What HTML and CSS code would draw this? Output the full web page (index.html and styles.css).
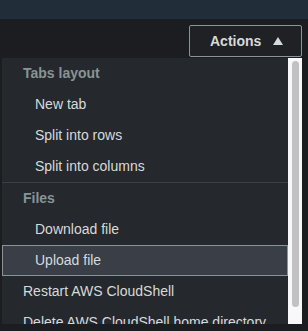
FILE: index.html
```html
<!DOCTYPE html>
<html lang="en">
<head>
  <meta charset="UTF-8">
  <title>CloudShell Actions</title>
  <link rel="stylesheet" href="styles.css">
</head>
<body>
  <div class="topbar"></div>

  <div class="toolbar">
    <button class="actions-btn">
      Actions
      <svg class="caret" width="10" height="8" viewBox="0 0 10 8"><polygon points="5,0 10,8 0,8" fill="#d5dbdb"/></svg>
    </button>
  </div>

  <!-- Dropdown menu -->
  <div class="menu">
    <ul class="menu-list">
      <li class="group-title">Tabs layout</li>
      <li class="item sub">New tab</li>
      <li class="item sub">Split into rows</li>
      <li class="item sub">Split into columns</li>
      <li class="divider"></li>
      <li class="group-title">Files</li>
      <li class="item sub">Download file</li>
      <li class="item sub active">Upload file</li>
      <li class="item">Restart AWS CloudShell</li>
      <li class="item">Delete AWS CloudShell home directory</li>
    </ul>
    <div class="scrollbar"><div class="thumb"></div></div>
  </div>
</body>
</html>
```

FILE: styles.css
```css
* {
  margin: 0;
  padding: 0;
  box-sizing: border-box;
  font-family: "Liberation Sans", Arial, sans-serif;
}
body {
  width: 308px;
  height: 331px;
  overflow: hidden;
  background: #1b1d21;
}
.topbar {
  height: 19px;
  background: #222d3a;
}
.toolbar {
  display: flex;
  justify-content: flex-end;
  padding: 6px 6px 0 0;
}
.actions-btn {
  display: flex;
  align-items: center;
  gap: 12px;
  width: 113px;
  height: 32px;
  padding: 0 0 0 20px;
  background: #1f2125;
  border: 1px solid #879596;
  border-radius: 2px;
  color: #d5dbdb;
  font-size: 14px;
  font-weight: 700;
}
.caret {
  margin-top: -1px;
}
.menu {
  display: flex;
  width: 300px;
  height: 266px;
  margin: 1px 0 0 2px;
  background: #25282d;
  overflow: hidden;
}
.menu-list {
  flex: 1;
  list-style: none;
}
.group-title,
.item {
  height: 31px;
  line-height: 31px;
  padding-left: 21px;
  font-size: 14px;
  white-space: nowrap;
}
.group-title {
  color: #879596;
  font-weight: 700;
}
.item {
  color: #d5dbdb;
}
.item.sub {
  padding-left: 33px;
}
.item.active {
  background: #3a3f47;
  border: 1px solid #879596;
  line-height: 29px;
  padding-left: 32px;
}
.divider {
  height: 1px;
  margin-bottom: 0;
  background: #3b4046;
}
.scrollbar {
  width: 14px;
  background: #f8f8f8;
  padding: 3px 3px 0 4px;
}
.thumb {
  height: 246px;
  background: #c1c1c1;
  border-radius: 4px;
}
```
